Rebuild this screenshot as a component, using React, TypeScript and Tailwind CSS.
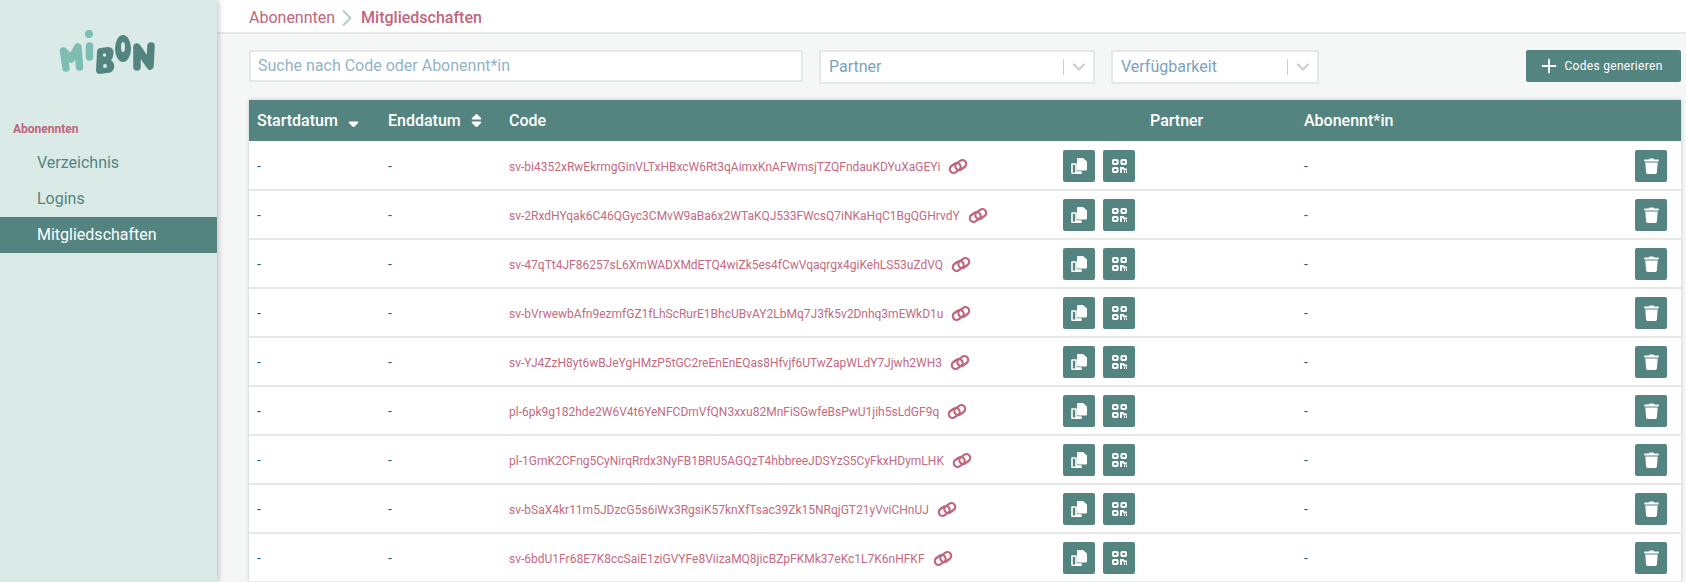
import { Plus, ChevronRight, ChevronDown } from "lucide-react";
import { FaSortDown, FaSort } from "react-icons/fa";

const codes = [
  "sv-bi4352xRwEkrmgGinVLTxHBxcW6Rt3qAimxKnAFWmsjTZQFndauKDYuXaGEYi",
  "sv-2RxdHYqak6C46QGyc3CMvW9aBa6x2WTaKQJ533FWcsQ7iNKaHqC1BgQGHrvdY",
  "sv-47qTt4JF86257sL6XmWADXMdETQ4wiZk5es4fCwVqaqrgx4giKehLS53uZdVQ",
  "sv-bVrwewbAfn9ezmfGZ1fLhScRurE1BhcUBvAY2LbMq7J3fk5v2Dnhq3mEWkD1u",
  "sv-YJ4ZzH8yt6wBJeYgHMzP5tGC2reEnEnEQas8Hfvjf6UTwZapWLdY7Jjwh2WH3",
  "pl-6pk9g182hde2W6V4t6YeNFCDmVfQN3xxu82MnFiSGwfeBsPwU1jih5sLdGF9q",
  "pl-1GmK2CFng5CyNirqRrdx3NyFB1BRU5AGQzT4hbbreeJDSYzS5CyFkxHDymLHK",
  "sv-bSaX4kr11m5JDzcG5s6iWx3RgsiK57knXfTsac39Zk15NRqjGT21yVviCHnUJ",
  "sv-6bdU1Fr68E7K8ccSaiE1ziGVYFe8ViizaMQ8jicBZpFKMk37eKc1L7K6nHFKF",
];

function Logo() {
  return (
    <svg viewBox="0 0 96 44" className="w-[96px] h-[44px]">
      <g fill="none" strokeLinecap="round" strokeLinejoin="round" strokeWidth="7.5">
        <path d="M7 38 L4.5 21 L12 29 L19 17 L20.5 37" stroke="#7dbdb3" />
        <path d="M30.5 16 L30.5 27" stroke="#7dbdb3" />
        <path d="M78 37 L78 17 L91 36 L92 16" stroke="#54847f" />
      </g>
      <circle cx="30" cy="4" r="4" fill="#7dbdb3" />
      <path
        d="M38 22 Q38 18 42 18 L49 17 Q55 17 54.5 24 Q54 28 52 30 Q56 33 55 38 Q54 43 48 43 L41 44 Q37 44 37 40 Z"
        fill="#54847f"
      />
      <circle cx="45.5" cy="25" r="1.7" fill="#d9eae7" />
      <circle cx="46" cy="36" r="2" fill="#d9eae7" />
      <ellipse cx="64" cy="18.5" rx="8" ry="13.5" fill="#54847f" />
      <ellipse cx="64" cy="17" rx="2" ry="5" fill="#d9eae7" />
    </svg>
  );
}

function LinkIcon() {
  return (
    <svg viewBox="0 0 20 17" className="w-[20px] h-[17px] ml-[8px]" fill="none" stroke="#c0657c" strokeWidth="2.2">
      <rect x="1.5" y="6.2" width="11.5" height="7.6" rx="3.8" transform="rotate(-35 7.2 10)" />
      <rect x="7" y="3.2" width="11.5" height="7.6" rx="3.8" transform="rotate(-35 12.8 7)" />
    </svg>
  );
}

function CopyIcon() {
  return (
    <svg viewBox="0 0 16 16" className="w-[16px] h-[16px]">
      <path d="M1 6 H5 V14 H10 V15.2 H1 Z" fill="none" stroke="white" strokeWidth="1.6" strokeLinejoin="round" />
      <path d="M6 1 Q6 0 7 0 H12 L16 3.5 V11 Q16 12.5 15 12.5 H7 Q6 12.5 6 11.5 Z" fill="white" />
    </svg>
  );
}

function QrIcon() {
  return (
    <svg viewBox="0 0 15 14" className="w-[15px] h-[14px]" fill="none" stroke="white" strokeWidth="2">
      <rect x="1" y="1" width="4.6" height="4" rx="0.8" />
      <rect x="9.4" y="1" width="4.6" height="4" rx="0.8" />
      <rect x="1" y="9" width="4.6" height="4" rx="0.8" />
      <path d="M9 14 V9 H11 L12.2 10.6 H15" />
      <path d="M12 13 H13 M14 13 H15" />
    </svg>
  );
}

function TrashIcon() {
  return (
    <svg viewBox="0 0 15 16" className="w-[15px] h-[16px]" fill="white">
      <path d="M0.3 1.6 H4.8 L5.6 0.4 H9.4 L10.2 1.6 H14.7 V3.4 H0.3 Z" />
      <path d="M1.3 4.6 H13.7 L12.9 14.6 Q12.8 16 11.4 16 H3.6 Q2.2 16 2.1 14.6 Z" />
    </svg>
  );
}

function Select({ label, width }: { label: string; width: string }) {
  return (
    <div className={`${width} h-[34px] flex items-center bg-white border-2 border-[#e6e8e7] pl-[8px] text-[16px] text-[#7ba3c0]`}>
      <span className="flex-1">{label}</span>
      <span className="w-px h-[16px] bg-[#cccccc]" />
      <ChevronDown size={20} strokeWidth={2.5} className="text-[#cccccc] ml-[5px] mr-[4px]" />
    </div>
  );
}

function IconButton({ children }: { children: React.ReactNode }) {
  return (
    <button className="w-[32px] h-[32px] rounded-[2px] bg-[#54847f] flex items-center justify-center">
      {children}
    </button>
  );
}

export default function App() {
  return (
    <div className="w-[1686px] h-[582px] overflow-hidden flex bg-[#f5f7f6] font-['Roboto',sans-serif]">
      <aside className="w-[217px] shrink-0 bg-[#d9eae7] shadow-[2px_0_5px_rgba(0,0,0,0.2)] z-10">
        <div className="h-[112px] pt-[30px] pl-[59px]">
          <Logo />
        </div>
        <p className="pl-[13px] mt-[8px] text-[12px] leading-[18px] font-bold text-[#c0657c]">Abonennten</p>
        <nav className="mt-[7px] text-[16px]">
          <div className="h-[36px] flex items-center pl-[37px] text-[#54847f]">Verzeichnis</div>
          <div className="h-[36px] flex items-center pl-[37px] text-[#54847f]">Logins</div>
          <div className="h-[36px] flex items-center pl-[37px] bg-[#54847f] text-white">Mitgliedschaften</div>
        </nav>
      </aside>
      <main className="flex-1 min-w-0">
        <div className="h-[34px] bg-white border-b-2 border-[#e6e8e7] flex items-center pl-[32px] pt-[3px] text-[16px] text-[#c0657c]">
          <span>Abonennten</span>
          <ChevronRight size={28} strokeWidth={1.6} className="text-[#b9c8cc] -ml-[2px]" />
          <span className="font-medium">Mitgliedschaften</span>
        </div>
        <div className="pl-[32px] pr-[5px]">
          <div className="flex items-start mt-[16px] h-[50px]">
            <div className="w-[554px] h-[32px] flex items-center bg-white border-2 border-[#e6e8e7] pl-[7px] text-[16px] text-[#93b3c6]">
              Suche nach Code oder Abonennt*in
            </div>
            <div className="ml-[16px]"><Select label="Partner" width="w-[276px]" /></div>
            <div className="ml-[16px]"><Select label="Verfügbarkeit" width="w-[208px]" /></div>
            <button className="ml-auto w-[155px] h-[32px] rounded-[2px] bg-[#54847f] text-white text-[12px] tracking-[0.3px] flex items-center justify-center gap-[4px] pr-[6px]">
              <Plus size={22} strokeWidth={2} />
              Codes generieren
            </button>
          </div>
          <div className="bg-white shadow-[0_0_4px_rgba(0,0,0,0.2)]">
            <div className="h-[41px] bg-[#54847f] text-white text-[16px] font-medium flex items-center">
              <div className="w-[139px] pl-[8px] flex items-center">
                Startdatum
                <FaSortDown size={17} className="ml-[7px]" />
              </div>
              <div className="w-[121px] flex items-center">
                Enddatum
                <FaSort size={17} className="ml-[7px]" />
              </div>
              <div className="w-[641px]">Code</div>
              <div className="w-[154px]">Partner</div>
              <div>Abonennt*in</div>
            </div>
            <div className="pt-[1px]">
              {codes.map((code) => (
                <div key={code} className="h-[49px] border-b-2 border-[#e6e8e7] flex items-center text-[12px]">
                  <div className="w-[139px] pl-[8px] pt-[2px] text-[14px] text-[#1f6091]">-</div>
                  <div className="w-[121px] pt-[2px] text-[14px] text-[#1f6091]">-</div>
                  <div className="w-[554px] pt-[2px] flex items-center text-[#c46a80]">
                    <span>{code}</span>
                    <LinkIcon />
                  </div>
                  <div className="w-[241px] flex gap-[8px]">
                    <IconButton><CopyIcon /></IconButton>
                    <IconButton><QrIcon /></IconButton>
                  </div>
                  <div className="flex-1 pt-[2px] text-[14px] text-[#1f6091]">-</div>
                  <div className="mr-[14px]">
                    <IconButton><TrashIcon /></IconButton>
                  </div>
                </div>
              ))}
            </div>
          </div>
        </div>
      </main>
    </div>
  );
}
